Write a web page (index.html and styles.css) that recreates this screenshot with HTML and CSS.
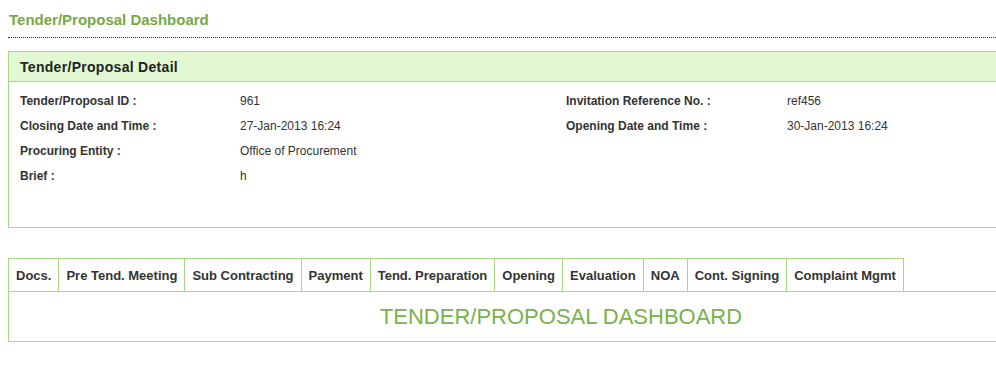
FILE: index.html
```html
<!DOCTYPE html>
<html>
<head>
<meta charset="utf-8">
<link rel="stylesheet" href="styles.css">
</head>
<body>
<div class="page">
  <div class="page-title">Tender/Proposal Dashboard</div>
  <div class="rule"></div>
  <div class="detail">
    <div class="detail-head">Tender/Proposal Detail</div>
    <div class="detail-body">
      <div class="lbl">Tender/Proposal ID :</div><div class="val">961</div>
      <div class="lbl">Invitation Reference No. :</div><div class="val">ref456</div>
      <div class="lbl">Closing Date and Time :</div><div class="val">27-Jan-2013 16:24</div>
      <div class="lbl">Opening Date and Time :</div><div class="val">30-Jan-2013 16:24</div>
      <div class="lbl">Procuring Entity :</div><div class="val">Office of Procurement</div>
      <div class="lbl"></div><div class="val"></div>
      <div class="lbl">Brief :</div><div class="val">h</div>
      <div class="lbl"></div><div class="val"></div>
    </div>
  </div>
  <div class="tabs">
    <div class="tab">Docs.</div>
    <div class="tab">Pre Tend. Meeting</div>
    <div class="tab">Sub Contracting</div>
    <div class="tab">Payment</div>
    <div class="tab">Tend. Preparation</div>
    <div class="tab">Opening</div>
    <div class="tab">Evaluation</div>
    <div class="tab">NOA</div>
    <div class="tab">Cont. Signing</div>
    <div class="tab">Complaint Mgmt</div>
  </div>
  <div class="tab-content">TENDER/PROPOSAL DASHBOARD</div>
</div>
</body>
</html>
```
FILE: styles.css
```css
html, body {
  margin: 0;
  padding: 0;
  background: #fff;
  overflow: hidden;
}
body {
  font-family: "Liberation Sans", Arial, sans-serif;
  color: #333;
}
.page {
  width: 1106px;
  padding: 0 8px;
}
.page-title {
  padding: 11px 0 0 1px;
  height: 18px;
  font-size: 15px;
  font-weight: bold;
  color: #76a945;
  line-height: 18px;
}
.rule {
  margin-top: 8px;
  border-top: 1px dotted #333;
}
.detail {
  margin-top: 13px;
  border: 1px solid #a6dc7f;
}
.detail-head {
  height: 29px;
  line-height: 30px;
  background: #e2f8d3;
  border-bottom: 1px solid #a6dc7f;
  padding-left: 11px;
  font-size: 14px;
  letter-spacing: 0.3px;
  font-weight: bold;
  color: #222;
}
.detail-body {
  display: grid;
  grid-template-columns: 220px 326px 221px 1fr;
  grid-auto-rows: 25px;
  padding: 7px 0 38px 11px;
  font-size: 12px;
  line-height: 25px;
}
.lbl {
  font-weight: bold;
  color: #333;
}
.val {
  color: #333;
}
.tabs {
  margin-top: 30px;
  display: flex;
}
.tab {
  border: 1px solid #a6dc7f;
  border-bottom: none;
  border-right: none;
  height: 32px;
  line-height: 33px;
  padding: 0 7px;
  font-size: 13px;
  font-weight: bold;
  color: #333;
}
.tab:last-child {
  border-right: 1px solid #a6dc7f;
}
.tab-content {
  border: 1px solid #a6dc7f;
  height: 49px;
  line-height: 50px;
  text-align: center;
  font-size: 22px;
  color: #7ab14b;
}
```
